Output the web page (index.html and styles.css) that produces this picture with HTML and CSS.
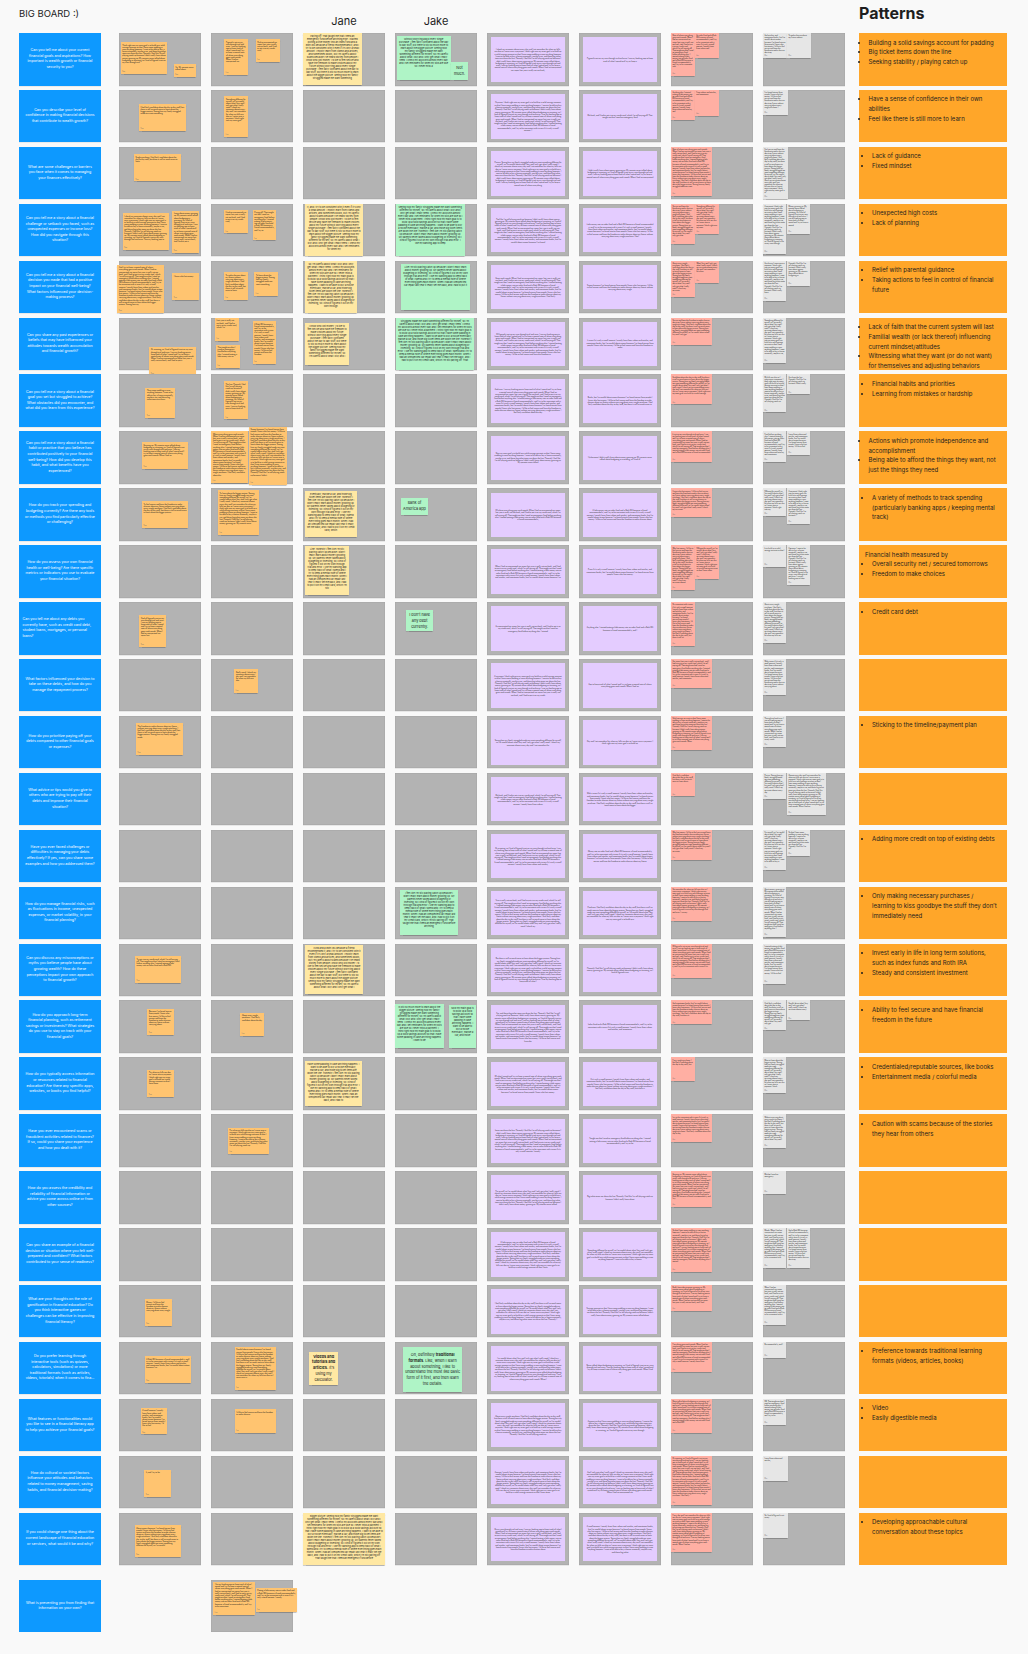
FILE: index.html
```html
<!DOCTYPE html>
<html lang="en">
<head>
<meta charset="utf-8">
<title>BIG BOARD :)</title>
<link rel="stylesheet" href="styles.css">
</head>
<body>
<main class="page">
  <header class="board-head">
    <h1 class="title">BIG BOARD :)</h1>
    <div class="person person-jane">Jane</div>
    <div class="person person-jake">Jake</div>
    <h2 class="patterns-title">Patterns</h2>
  </header>
  <section class="board" id="board"></section>
  <section class="board board-extra" id="board-extra"></section>
</main>
<script src="app.js"></script>
</body>
</html>
```

FILE: styles.css
```css
* { box-sizing: border-box; }
html, body { margin: 0; }
body {
  background: #f9f9f9;
  font-family: Inter, "Noto Sans", "Liberation Sans", sans-serif;
  color: #1e1e1e;
}
.page { width: 1028px; padding-left: 19px; }

.board-head, .board {
  display: grid;
  grid-template-columns: 90px repeat(8, 82px) 152px;
  column-gap: 10px;
}
.board-head { height: 33px; align-items: start; }
.title {
  grid-column: 1 / 4;
  margin: 0;
  padding-top: 9.3px;
  font-size: 9.5px;
  line-height: 10px;
  font-weight: 400;
}
.person { padding-top: 15.5px; font-size: 11px; line-height: 11px; text-align: center; }
.person-jane { grid-column: 4; }
.person-jake { grid-column: 5; }
.patterns-title {
  grid-column: 10;
  margin: 0 0 0 4px;
  padding-top: 4.7px;
  font-size: 16px;
  line-height: 16px;
  font-weight: 700;
}

.board { grid-auto-rows: 52.5px; row-gap: 4.42px; }
.board-extra { margin-top: 14.8px; }

.q {
  width: 82px;
  background: #0d99ff;
  color: #fff;
  display: flex;
  align-items: center;
  justify-content: center;
  text-align: center;
  padding: 0 6px;
  font-size: 3.6px;
  line-height: 5.6px;
  box-shadow: 0 0.5px 0 rgba(0,0,0,0.12);
}
.q-left { justify-content: flex-start; text-align: left; padding: 0 3.5px; }
.at-col3 { grid-column: 3; }

.cell {
  position: relative;
  background: #b3b3b3;
  box-shadow: inset 0 0 0 0.5px rgba(0,0,0,0.08), 0 0.6px 0 rgba(0,0,0,0.12);
}
.cell-lilac { padding: 4.3px 4.3px 3.8px; }
.lilac {
  height: 100%;
  background: #e4ccff;
  display: flex;
  align-items: center;
  justify-content: center;
  text-align: center;
  padding: 2px 3px;
  color: #3a3a3a;
  font-size: 1.8px;
  line-height: 2.3px;
  overflow: hidden;
}

.note {
  position: absolute;
  overflow: hidden;
  color: #222;
  box-shadow: 0 0.5px 1px rgba(0,0,0,0.22);
}
.note-o { background: #ffc470; font-size: 1.8px; line-height: 2.15px; padding: 1.6px; }
.note-y { background: #ffe8a3; font-size: 2.3px; line-height: 3px; padding: 2px; text-align: center; }
.note-g { background: #aff4c6; font-size: 2.3px; line-height: 3px; padding: 2px; text-align: center; }
.note-r { background: #ffafa3; font-size: 1.7px; line-height: 2.05px; padding: 1.4px; }
.note-s { background: #e6e6e6; font-size: 1.7px; line-height: 2.05px; padding: 1.4px; }
.note-big {
  display: flex;
  align-items: center;
  justify-content: center;
  text-align: center;
  font-size: 3.8px;
  line-height: 5.8px;
  padding: 1.2px;
}
.note-big p { margin: 0; }
.note-big b { font-weight: 700; }
.note-by {
  position: absolute;
  left: 1.5px;
  bottom: 1.3px;
  font-size: 1.4px;
  line-height: 1.6px;
  color: #6b6b6b;
}

.pattern {
  justify-self: end;
  width: 148px;
  background: #ffa629;
  font-size: 6px;
  line-height: 9.8px;
  padding: 4.5px 9.5px 0 0;
  color: #1e1e1e;
}
.pattern ul { margin: 0; padding-left: 9.5px; }
.pattern ul.indent { padding-left: 13px; }
.pattern .intro { margin: 0; padding-left: 6px; }
```

FILE: app.js
```js
(function () {
  var QUESTIONS = [
    "Can you tell me about your current financial goals and aspirations? How important is wealth growth or financial security to you?",
    "Can you describe your level of confidence in making financial decisions that contribute to wealth growth?",
    "What are some challenges or barriers you face when it comes to managing your finances effectively?",
    "Can you tell me a story about a financial challenge or setback you faced, such as unexpected expenses or income loss? How did you navigate through this situation?",
    "Can you tell me a story about a financial decision you made that had a positive impact on your financial well-being? What factors influenced your decision-making process?",
    "Can you share any past experiences or beliefs that may have influenced your attitudes towards wealth accumulation and financial growth?",
    "Can you tell me a story about a financial goal you set but struggled to achieve? What obstacles did you encounter, and what did you learn from this experience?",
    "Can you tell me a story about a financial habit or practice that you believe has contributed positively to your financial well-being? How did you develop this habit, and what benefits have you experienced?",
    "How do you track your spending and budgeting currently? Are there any tools or methods you find particularly effective or challenging?",
    "How do you assess your own financial health or well-being? Are there specific metrics or indicators you use to evaluate your financial situation?",
    "Can you tell me about any debts you currently have, such as credit card debt, student loans, mortgages, or personal loans?",
    "What factors influenced your decision to take on these debts, and how do you manage the repayment process?",
    "How do you prioritize paying off your debts compared to other financial goals or expenses?",
    "What advice or tips would you give to others who are trying to pay off their debts and improve their financial situation?",
    "Have you ever faced challenges or difficulties in managing your debts effectively? If yes, can you share some examples and how you addressed them?",
    "How do you manage financial risks, such as fluctuations in income, unexpected expenses, or market volatility, in your financial planning?",
    "Can you discuss any misconceptions or myths you believe people have about growing wealth? How do these perceptions impact your own approach to financial growth?",
    "How do you approach long-term financial planning, such as retirement savings or investments? What strategies do you use to stay on track with your financial goals?",
    "How do you typically access information or resources related to financial education? Are there any specific apps, websites, or books you find helpful?",
    "Have you ever encountered scams or fraudulent activities related to finances? If so, could you share your experience and how you dealt with it?",
    "How do you assess the credibility and reliability of financial information or advice you come across online or from other sources?",
    "Can you share an example of a financial decision or situation where you felt well-prepared and confident? What factors contributed to your sense of readiness?",
    "What are your thoughts on the role of gamification in financial education? Do you think interactive games or challenges can be effective in improving financial literacy?",
    "Do you prefer learning through interactive tools (such as quizzes, calculators, simulations) or more traditional formats (such as articles, videos, tutorials) when it comes to fina...",
    "What features or functionalities would you like to see in a financial literacy app to help you achieve your financial goals?",
    "How do cultural or societal factors influence your attitudes and behaviors related to money management, saving habits, and financial decision-making?",
    "If you could change one thing about the current landscape of financial education or services, what would it be and why?"
  ];
  var LAST_QUESTION = "What is preventing you from finding that information on your own?";

  var PATTERNS = [
    { items: ["Building a solid savings account for padding", "Big ticket items down the line", "Seeking stability / playing catch up"] },
    { items: ["Have a sense of confidence in their own abilities", "Feel like there is still more to learn"] },
    { indent: true, items: ["Lack of guidance", "Fixed mindset"] },
    { indent: true, items: ["Unexpected high costs", "Lack of planning"] },
    { indent: true, items: ["Relief with parental guidance", "Taking actions to feel in control of financial future"] },
    { items: ["Lack of faith that the current system will last", "Familial wealth (or lack thereof) influencing current mindset/attitudes", "Witnessing what they want (or do not want) for themselves and adjusting behaviors"] },
    { indent: true, items: ["Financial habits and priorities", "Learning from mistakes or hardship"] },
    { items: ["Actions which promote independence and accomplishment", "Being able to afford the things they want, not just the things they need"] },
    { indent: true, items: ["A variety of methods to track spending (particularly banking apps / keeping mental track)"] },
    { indent: true, intro: "Financial health measured by", items: ["Overall security net / secured tomorrows", "Freedom to make choices"] },
    { indent: true, items: ["Credit card debt"] },
    { items: [] },
    { indent: true, items: ["Sticking to the timeline/payment plan"] },
    { items: [] },
    { indent: true, items: ["Adding more credit on top of existing debts"] },
    { indent: true, items: ["Only making necessary purchases / learning to kiss goodbye the stuff they don\u2019t immediately need"] },
    { indent: true, items: ["Invest early in life in long term solutions, such as index funds and Roth IRA", "Steady and consistent investment"] },
    { indent: true, items: ["Ability to feel secure and have financial freedom in the future"] },
    { indent: true, items: ["Credentialed/reputable sources, like books", "Entertainment media / colorful media"] },
    { indent: true, items: ["Caution with scams because of the stories they hear from others"] },
    { items: [] },
    { items: [] },
    { items: [] },
    { indent: true, items: ["Preference towards traditional learning formats (videos, articles, books)"] },
    { indent: true, items: ["Video", "Easily digestible media"] },
    { items: [] },
    { indent: true, items: ["Developing approachable cultural conversation about these topics"] }
  ];

  var SRC = "I think right now my main goal is to build up a solid savings account so that I have some padding in case anything happens. " +
    "I want to be able to buy a house eventually, maybe a car, and those big ticket items are down the line. " +
    "Honestly I feel like I'm still playing catch up because I didn't really learn about money growing up. " +
    "My parents never talked about budgeting or investing, so I kind of figured it out on my own through trial and error. " +
    "I use my banking app to keep track of what I spend and I try to keep a mental note of where everything goes each month. " +
    "When I had an unexpected car repair last year it really set me back, and I had to put it on my credit card, which I'm still paying off. " +
    "That taught me that I need an emergency fund before anything else. " +
    "I started putting a little money into an index fund and a Roth IRA because a friend recommended it, and I try to be consistent with it even if it's only a small amount. " +
    "I mostly learn from videos and articles, and sometimes books, but I'm careful about scams because I've heard stories from people I know who lost money. " +
    "I'd like to feel secure and have the freedom to make choices about my future without worrying about every single purchase. " +
    "I feel fairly confident about the day to day stuff, but there is still so much more to learn about the bigger picture. " +
    "Seeing how my family struggled made me want something different for myself, so I'm careful about what I buy and I only get what I really need. " +
    "I check my accounts almost every day and I set reminders for when my bills are due so I never miss a payment. ";

  var TYPES = {
    o: { pad: 1.6, cw: 0.95, lh: 2.15, foot: 3 },
    y: { pad: 2, cw: 1.2, lh: 3, foot: 0 },
    g: { pad: 2, cw: 1.2, lh: 3, foot: 0 },
    r: { pad: 1.4, cw: 0.9, lh: 2.05, foot: 3 },
    s: { pad: 1.4, cw: 0.9, lh: 2.05, foot: 3 }
  };
  var NAMES = { 1: "Sam", 2: "Lee", 3: "Jane", 4: "Jake", 7: "Ana", 8: "Max" };

  // Big-text notes: list of [bold?, text] segments rendered as one paragraph.
  var BIG = {
    notMuch: [[0, "Not much."]],
    bank: [[0, "Bank of America app"]],
    noDebt: [[0, "I don\u2019t have any debt currently."]],
    videos: [[1, "Videos and tutorials and articles."], [0, " It\u2019s using my calculator."]],
    formats: [[0, "Oh, definitely "], [1, "traditional formats"], [0, ". Like, when I learn about something, I like to understand the most like basic form of it first, and then learn the details."]]
  };

  // [row, col, type, left, top, width, height, fill, bigKey]
  var NOTES = [
    [0, 1, "o", 1.7, 9, 46.7, 31.7, 0.8],
    [0, 1, "o", 54.7, 31, 22, 13.3, 0.6],
    [0, 2, "o", 13.3, 6, 23.3, 35.7, 0.7],
    [0, 2, "o", 44.7, 6, 24, 23.3, 0.6],
    [0, 3, "y", 0, 0, 58.7, 52.3, 0.95],
    [0, 4, "g", 1.7, 3.3, 54, 43.7, 0.75],
    [0, 4, "g", 55.7, 29.3, 17.7, 17.7, 0, "notMuch"],
    [1, 1, "o", 20, 14, 46.7, 27, 0.4],
    [1, 2, "o", 13.3, 6, 23.7, 40.7, 0.7],
    [2, 1, "o", 15, 7.3, 46.7, 27.3, 0.25],
    [3, 1, "o", 3.7, 9.3, 46.7, 36.7, 0.9],
    [3, 1, "o", 53.3, 7, 27, 42.3, 0.85],
    [3, 2, "o", 13, 6, 23.7, 23.7, 0.6],
    [3, 2, "o", 41.7, 6, 23.3, 30.7, 0.8],
    [3, 3, "y", 2, 0.3, 58, 51.7, 0.95],
    [3, 4, "g", 0.7, 0.3, 69, 51.7, 0.85],
    [4, 1, "o", -1.7, 4, 46.7, 48.3, 0.95],
    [4, 1, "o", 53.3, 12.3, 27, 26.7, 0.1],
    [4, 2, "o", 13, 11.7, 23.7, 28, 0.8],
    [4, 2, "o", 43.3, 11.7, 23.7, 23.3, 0.55],
    [4, 3, "y", 2, 0, 51.7, 52.3, 0.95],
    [4, 4, "g", 6, 3.3, 69, 45.7, 0.55],
    [5, 1, "o", 30.3, 29.3, 46.7, 28.7, 0.6],
    [5, 2, "o", 4, 0.3, 23.7, 23.3, 0.5],
    [5, 2, "o", 5, 27, 24, 23.3, 0.65],
    [5, 2, "o", 41.7, 3.7, 23.7, 42.7, 0.85],
    [5, 3, "y", 2, 5, 44, 42, 0.9],
    [5, 4, "g", 0.7, 0.3, 78.3, 52, 0.95],
    [6, 1, "o", 26.3, 13.3, 29.7, 30, 0.45],
    [6, 2, "o", 13, 7, 23.7, 38, 0.85],
    [7, 1, "o", 23, 10.7, 46.3, 27.3, 0.6],
    [7, 2, "o", 0.3, -0.3, 36.7, 52.3, 0.95],
    [7, 2, "o", 38, -4.7, 38.3, 58.7, 0.95],
    [8, 1, "o", 23, 12.7, 46.3, 26.7, 0.55],
    [8, 2, "o", 7, 2, 40.7, 45, 0.9],
    [8, 3, "y", 2, 2.7, 51.7, 45.7, 0.95],
    [8, 4, "g", 6, 9.3, 27, 17.3, 0, "bank"],
    [9, 3, "y", 2, 1.3, 44, 48.7, 0.95],
    [10, 1, "o", 20.3, 13, 26.7, 31.7, 0.75],
    [10, 4, "g", 11.3, 8.3, 26.7, 21, 0, "noDebt"],
    [11, 2, "o", 23.3, 10.3, 23.7, 23.7, 0.55],
    [12, 1, "o", 17, 7.3, 46.7, 32, 0.45],
    [15, 4, "g", 5, 3, 58, 45.3, 0.85],
    [16, 1, "o", 16, 12.7, 46.3, 26.7, 0.45],
    [16, 3, "y", 2, 1.7, 58, 49.3, 0.95],
    [17, 1, "o", 28.3, 8.3, 26.7, 26.3, 0.7],
    [17, 2, "o", 29.3, 12.3, 23.7, 23, 0.4],
    [17, 4, "g", 0, 3.3, 48.7, 44, 0.9],
    [17, 4, "g", 53.7, 4.7, 27.7, 42.7, 0.7],
    [18, 1, "o", 28.3, 12.3, 26.7, 27, 0.6],
    [18, 3, "y", 2, 3.3, 56.7, 45, 0.95],
    [19, 2, "o", 17, 13.3, 41, 26.3, 0.9],
    [22, 1, "o", 25.7, 14, 27, 27.3, 0.5],
    [23, 1, "o", 25.7, 14.3, 46.7, 26.7, 0.5],
    [23, 2, "o", 23.7, 5, 41, 42.7, 0.85],
    [23, 3, "y", 6.3, 10, 28.7, 32.7, 0, "videos"],
    [23, 4, "g", 8, 5, 59.3, 45.3, 0, "formats"],
    [24, 1, "o", 21.7, 9, 26.7, 26.7, 0.8],
    [24, 2, "o", 23.7, 10.7, 41, 23.3, 0.2],
    [25, 1, "o", 25.3, 14, 27, 27.3, 0.08],
    [26, 1, "o", 15.7, 12.7, 46.7, 31.7, 0.75],
    [26, 3, "y", 0, 0, 82, 52.3, 0.98]
  ];
  var LAST_NOTES = [
    [27, 2, "o", 2.3, 1.7, 41.3, 33, 0.9],
    [27, 2, "o", 44.7, 8, 41.7, 24, 0.5]
  ];

  var L5 = [11, 14, 12, 12, 10, 11, 12, 5, 5, 7, 3, 10, 3, 5, 9, 13, 12, 14, 9, 11, 8, 13, 9, 11, 10, 11, 11];
  var L6 = [2, 2, 5, 7, 3, 4, 5, 2, 6, 3, 2, 2, 2, 7, 6, 7, 3, 3, 6, 3, 2, 6, 5, 4, 6, 12, 14];

  // [left, top, width, height, fill]
  var RED = [
    [[0, 0, 23.8, 42.6, 0.9], [23.8, 0, 24, 24.8, 0.75]],
    [[0, 0, 23.8, 30.4, 0.85], [23.8, 0, 24, 26, 0.2]],
    [[0, 0, 41.2, 49.3, 0.95]],
    [[0, 0, 24, 40, 0.9], [24, 0, 24, 30, 0.85]],
    [[0, 0, 24, 36, 0.9], [24, 0, 24, 22, 0.6]],
    [[0, 0, 41, 27, 0.8]],
    [[0, 0, 41, 30, 0.85]],
    [[0, 0, 41, 30.7, 0.9]],
    [[0, 0, 41, 29, 0.9]],
    [[0, 0, 24, 45, 0.95], [24, 0, 24, 34, 0.9]],
    [[0, 0, 23.7, 43.7, 0.95]],
    [[0, 0, 41, 29, 0.85]],
    [[0, 0, 41, 34, 0.9]],
    [[0, 0, 23.7, 23.7, 0.5]],
    [[0, 0, 41, 30, 0.85]],
    [[0, 0, 41, 34, 0.9]],
    [[0, 0, 41, 34, 0.9]],
    [[0, 0, 41, 24, 0.8]],
    [[0, 0, 23.7, 23.7, 0.4]],
    [[0, 0, 41, 28, 0.85]],
    [[0, 0, 41, 36, 0.9]],
    [[0, 0, 41, 44, 0.9]],
    [[0, 0, 41, 26, 0.85]],
    [[0, 0, 41, 30, 0.85]],
    [[0, 0, 41, 34, 0.85]],
    [[0, 0, 41.2, 49.6, 0.95]],
    [[0, 0, 41.2, 39.5, 0.95]]
  ];
  var GRAY = [
    [[0, 0, 24, 24.8, 0.9], [24, 0, 24, 24.8, 0.2]],
    [[0, 0, 24.5, 25.2, 0.8]],
    [[0, 0, 24.5, 52.5, 0.95]],
    [[0, 0, 23.3, 50, 0.9], [24, 0, 23.3, 30, 0.8]],
    [[0, 0, 23.3, 40, 0.9], [24, 0, 23.3, 25, 0.7]],
    [[0, 0, 23.3, 45, 0.9]],
    [[0, 0, 23.3, 38, 0.9], [24, 0, 23.3, 20, 0.6]],
    [[0, 0, 23.3, 31, 0.9], [24, 0, 23.3, 23.3, 0.85]],
    [[0, 0, 23.3, 28, 0.9], [24, 0, 23.3, 35.7, 0.9]],
    [[0, 0, 23.3, 21.7, 0.3], [24, 0, 23.3, 40, 0.95]],
    [[0, 0, 23.3, 41, 0.95]],
    [[0, 0, 23.3, 35.7, 0.9]],
    [[0, 0, 23.3, 31, 0.9]],
    [[0, 0, 23.3, 26, 0.85], [24, 0, 39, 42, 0.95]],
    [[0, 0, 23.3, 40, 0.9], [24, 0, 23.3, 26, 0.85]],
    [[0, 0, 23.3, 50, 0.95]],
    [[0, 0, 23.3, 40, 0.9]],
    [[0, 0, 23.3, 30, 0.9], [24, 0, 23.3, 20, 0.6]],
    [[0, 0, 23.3, 36, 0.9]],
    [[0, 0, 23.3, 34, 0.9]],
    [[0, 0, 23.3, 23, 0.15]],
    [[0, 0, 23.3, 40, 0.9], [24, 0, 23.3, 40, 0.9]],
    [[0, 0, 23.3, 40, 0.9]],
    [[0, 0, 23.3, 16, 0.2]],
    [[0, 0, 23.3, 26, 0.85]],
    [[0, 0, 24.5, 25, 0.15]],
    [[0, 0, 24.5, 25, 0.15]]
  ];

  var cursor = 0;
  var TRIPLE = SRC + SRC + SRC;
  function filler(n) {
    n = Math.max(8, Math.round(n));
    var start = cursor % SRC.length;
    var s = TRIPLE.slice(start, start + n + 12);
    cursor += Math.round(n * 0.61) + 53;
    s = s.replace(/^\S*\s+/, "");
    s = s.slice(0, n).replace(/\s+\S*$/, "");
    return s.charAt(0).toUpperCase() + s.slice(1);
  }

  function el(tag, cls, text) {
    var e = document.createElement(tag);
    if (cls) e.className = cls;
    if (text != null) e.textContent = text;
    return e;
  }

  function addNote(cell, type, l, t, w, h, fill, bigKey, col) {
    var cfg = TYPES[type];
    var n = el("div", "note note-" + type + (bigKey ? " note-big" : ""));
    n.style.left = l + "px";
    n.style.top = t + "px";
    n.style.width = w + "px";
    n.style.height = h + "px";
    if (bigKey) {
      var p = el("p");
      BIG[bigKey].forEach(function (seg) {
        if (seg[0]) p.appendChild(el("b", null, seg[1]));
        else p.appendChild(document.createTextNode(seg[1]));
      });
      n.appendChild(p);
    } else {
      var cap = ((w - 2 * cfg.pad) / cfg.cw) * ((h - 2 * cfg.pad - cfg.foot) / cfg.lh);
      n.appendChild(el("span", null, filler(cap * fill)));
      if (cfg.foot) n.appendChild(el("span", "note-by", NAMES[col] || ""));
    }
    cell.appendChild(n);
  }

  function grayCell(extraCls) {
    return el("div", "cell" + (extraCls ? " " + extraCls : ""));
  }

  function questionCell(text, idx) {
    var q = el("div", "q" + (idx === 10 ? " q-left" : ""));
    q.appendChild(el("span", null, text));
    return q;
  }

  function patternCell(p) {
    var box = el("div", "pattern");
    if (p.intro) box.appendChild(el("p", "intro", p.intro));
    if (p.items.length) {
      var ul = el("ul", p.indent ? "indent" : "");
      p.items.forEach(function (t) { ul.appendChild(el("li", null, t)); });
      box.appendChild(ul);
    }
    return box;
  }

  var board = document.getElementById("board");
  for (var r = 0; r < QUESTIONS.length; r++) {
    board.appendChild(questionCell(QUESTIONS[r], r));
    var cells = {};
    for (var c = 1; c <= 4; c++) {
      cells[c] = grayCell();
      board.appendChild(cells[c]);
    }
    NOTES.forEach(function (d) {
      if (d[0] === r) addNote(cells[d[1]], d[2], d[3], d[4], d[5], d[6], d[7], d[8], d[1]);
    });
    [L5[r] * 68, L6[r] * 62].forEach(function (len) {
      var pc = grayCell("cell-lilac");
      var li = el("div", "lilac");
      li.appendChild(el("span", null, filler(len)));
      pc.appendChild(li);
      board.appendChild(pc);
    });
    var red = grayCell();
    RED[r].forEach(function (d) { addNote(red, "r", d[0], d[1], d[2], d[3], d[4], null, 7); });
    board.appendChild(red);
    var gr = grayCell();
    GRAY[r].forEach(function (d) { addNote(gr, "s", d[0], d[1], d[2], d[3], d[4], null, 8); });
    board.appendChild(gr);
    board.appendChild(patternCell(PATTERNS[r]));
  }

  var extra = document.getElementById("board-extra");
  extra.appendChild(questionCell(LAST_QUESTION, 27));
  var lastCell = grayCell("at-col3");
  LAST_NOTES.forEach(function (d) { addNote(lastCell, d[2], d[3], d[4], d[5], d[6], d[7], d[8], d[1]); });
  extra.appendChild(lastCell);
})();
```
